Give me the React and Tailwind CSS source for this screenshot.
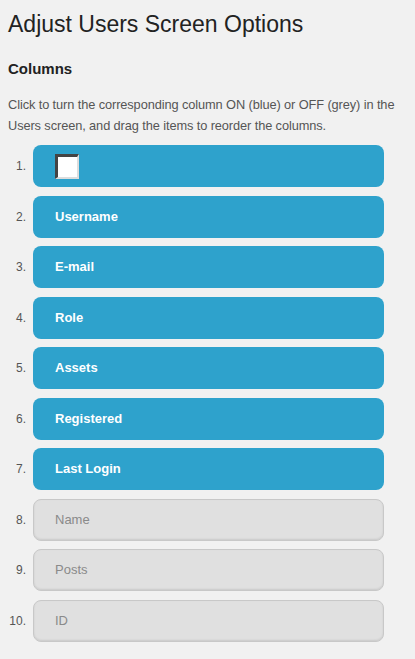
const columns = [
  { label: null, on: true },
  { label: 'Username', on: true },
  { label: 'E-mail', on: true },
  { label: 'Role', on: true },
  { label: 'Assets', on: true },
  { label: 'Registered', on: true },
  { label: 'Last Login', on: true },
  { label: 'Name', on: false },
  { label: 'Posts', on: false },
  { label: 'ID', on: false },
];

export default function App() {
  return (
    <div className="min-h-screen bg-[#f1f1f1] px-[8px] pt-[8px] font-['Liberation_Sans',Arial,sans-serif]">
      <h1 className="text-[23px] leading-[32px] text-[#222]">Adjust Users Screen Options</h1>
      <h2 className="mt-[20px] text-[15px] font-bold leading-[18px] text-[#222]">Columns</h2>
      <p className="mt-[16px] mr-[-8px] text-[12.8px] leading-[21px] tracking-[-0.1px] text-[#555]">
        Click to turn the corresponding column ON (blue) or OFF (grey) in the Users screen, and drag the items to reorder the columns.
      </p>

      <ol className="mt-[9px] flex flex-col gap-[8.5px]">
        {columns.map((col, i) => (
          <li key={i} className="flex items-center">
            <span className="w-[18px] text-right text-[12px] text-[#555]">{i + 1}.</span>
            <div
              className={
                col.on
                  ? 'ml-[7px] flex h-[42px] w-[351px] items-center rounded-[8px] bg-[#2ea2cc] pl-[22px] text-[13px] font-bold text-white'
                  : 'ml-[7px] flex h-[42px] w-[351px] items-center rounded-[8px] border border-[#c8c8c8] bg-[#e0e0e0] pl-[21px] text-[13px] text-[#8a8a8a] shadow-[inset_0_-1px_2px_rgba(0,0,0,0.1)]'
              }
            >
              {col.label ?? (
                <span className="block h-[25px] w-[24px] border-t-[3px] border-l-[3px] border-b-[2px] border-r-[2px] border-t-[#444] border-l-[#444] border-b-[#ddd] border-r-[#ddd] bg-white" />
              )}
            </div>
          </li>
        ))}
      </ol>
    </div>
  );
}
